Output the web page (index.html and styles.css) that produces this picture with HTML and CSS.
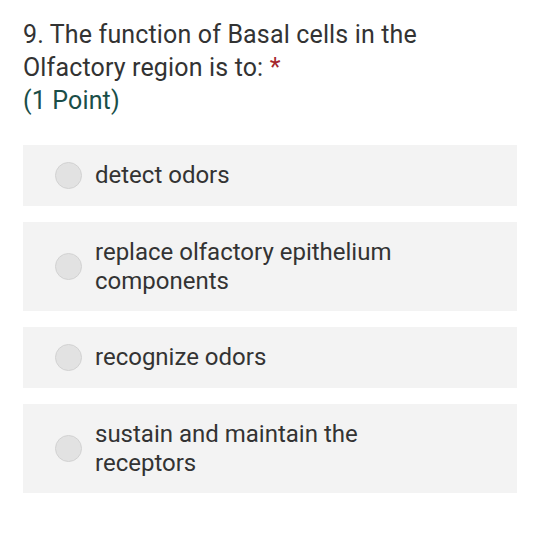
FILE: index.html
```html
<!DOCTYPE html>
<html>
<head>
<meta charset="utf-8">
<link rel="stylesheet" href="styles.css">
</head>
<body>
<div class="question">
  <div class="title">9. The function of Basal cells in the Olfactory region is to: <span class="req">*</span></div>
  <div class="points">(1 Point)</div>
  <div class="options">
    <div class="option"><span class="radio"></span><span class="label">detect odors</span></div>
    <div class="option"><span class="radio"></span><span class="label">replace olfactory epithelium components</span></div>
    <div class="option"><span class="radio"></span><span class="label">recognize odors</span></div>
    <div class="option"><span class="radio"></span><span class="label">sustain and maintain the receptors</span></div>
  </div>
</div>
</body>
</html>
```
FILE: styles.css
```css
html, body {
  margin: 0;
  padding: 0;
  background: #ffffff;
}
body {
  font-family: Roboto, "Noto Sans", sans-serif;
  color: #333333;
}
.question {
  padding: 18px 23px 0 23px;
  width: 494px;
}
.title {
  font-size: 25px;
  line-height: 33px;
  letter-spacing: 0.15px;
  width: 430px;
  color: #333333;
}
.req {
  color: #a4262c;
}
.points {
  font-size: 25px;
  line-height: 33px;
  letter-spacing: 0.15px;
  color: #1a4e48;
}
.options {
  margin-top: 28px;
  display: flex;
  flex-direction: column;
  gap: 16px;
}
.option {
  background: #f3f3f3;
  display: flex;
  align-items: center;
  padding: 16px 16px 15.5px 32px;
}
.radio {
  flex: none;
  width: 27px;
  height: 27px;
  border-radius: 50%;
  background: #e2e2e2;
  border: 1px solid #d2d2d2;
  box-sizing: border-box;
  margin-right: 13px;
}
.label {
  font-size: 24px;
  line-height: 29px;
  width: 320px;
  color: #333333;
}
```
